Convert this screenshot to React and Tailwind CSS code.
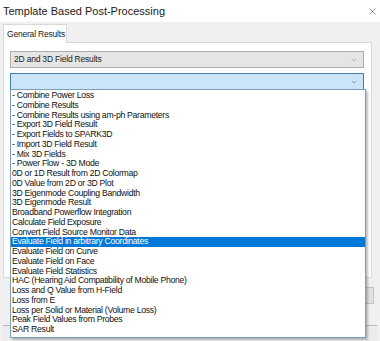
import { ChevronDown, X } from "lucide-react";

const items = [
  "- Combine Power Loss",
  "- Combine Results",
  "- Combine Results using am-ph Parameters",
  "- Export 3D Field Result",
  "- Export Fields to SPARK3D",
  "- Import 3D Field Result",
  "- Mix 3D Fields",
  "- Power Flow - 3D Mode",
  "0D or 1D Result from 2D Colormap",
  "0D Value from 2D or 3D Plot",
  "3D Eigenmode Coupling Bandwidth",
  "3D Eigenmode Result",
  "Broadband Powerflow Integration",
  "Calculate Field Exposure",
  "Convert Field Source Monitor Data",
  "Evaluate Field in arbitrary Coordinates",
  "Evaluate Field on Curve",
  "Evaluate Field on Face",
  "Evaluate Field Statistics",
  "HAC (Hearing Aid Compatibility of Mobile Phone)",
  "Loss and Q Value from H-Field",
  "Loss from E",
  "Loss per Solid or Material (Volume Loss)",
  "Peak Field Values from Probes",
  "SAR Result",
];

const selected = "Evaluate Field in arbitrary Coordinates";

export default function App() {
  return (
    <div className="relative w-[380px] h-[341px] flex flex-col bg-white overflow-hidden text-black font-['Liberation_Sans',Arial,sans-serif]">
      {/* Title bar */}
      <div className="h-[22px] flex items-center justify-between pl-[3px] pr-[2px] bg-white">
        <span className="text-[11px] text-[#1a1a1a]">Template Based Post-Processing</span>
        <X className="w-[11px] h-[11px] text-[#444]" strokeWidth={1.3} />
      </div>

      {/* Body */}
      <div className="flex-1 flex flex-col bg-[#f0f0f0] px-[3px] pt-[2px]">
        {/* Tabs */}
        <div className="flex h-[18px]">
          <div className="relative -mb-px z-10 w-[64px] bg-white border border-b-0 border-[#d9d9d9] flex items-center pl-[3px] text-[8.5px] tracking-[-0.2px] text-[#222]">
            General Results
          </div>
        </div>

        {/* Panel */}
        <div className="h-[236px] mr-[5px] bg-white border border-[#d9d9d9] pt-[8px] pl-[6px] pr-[7px] flex flex-col gap-[5px]">
          <div className="h-[17px] flex items-center justify-between bg-[#e5e5e5] border border-[#adadad] pl-[3px] pr-[5px] text-[8.5px] tracking-[-0.2px] text-[#222]">
            <span>2D and 3D Field Results</span>
            <ChevronDown className="w-[8px] h-[8px] text-[#777]" strokeWidth={1.5} />
          </div>
          <div className="h-[17px] flex items-center justify-end bg-[#cce4f7] border border-[#3c7fb1] pr-[5px]">
            <ChevronDown className="w-[8px] h-[8px] text-[#555]" strokeWidth={1.5} />
          </div>
        </div>

        {/* Button row behind the dropped list */}
        <div className="flex justify-end mt-[9px] pr-[3px]">
          <div className="w-[75px] h-[17px] bg-[#e1e1e1] border border-[#c4c4c4]" />
        </div>

        <div className="mt-auto h-[16px] border-t border-[#b9b9b9] bg-[#ececec]" />
      </div>

      {/* Dropped list overlay */}
      <div className="absolute left-[10px] top-[89px] w-[356px] h-[249px] bg-white border border-[#7c9ebd] shadow-[2px_2px_2px_rgba(0,0,0,0.25)] pt-[1px] text-[8.7px] tracking-[-0.3px] text-[#111]">
        {items.map((it) => (
          <div
            key={it}
            className={
              it === selected
                ? "h-[9.75px] leading-[9.75px] pl-[1px] bg-[#0078d7] text-white whitespace-nowrap"
                : "h-[9.75px] leading-[9.75px] pl-[1px] whitespace-nowrap"
            }
          >
            {it}
          </div>
        ))}
      </div>
    </div>
  );
}
